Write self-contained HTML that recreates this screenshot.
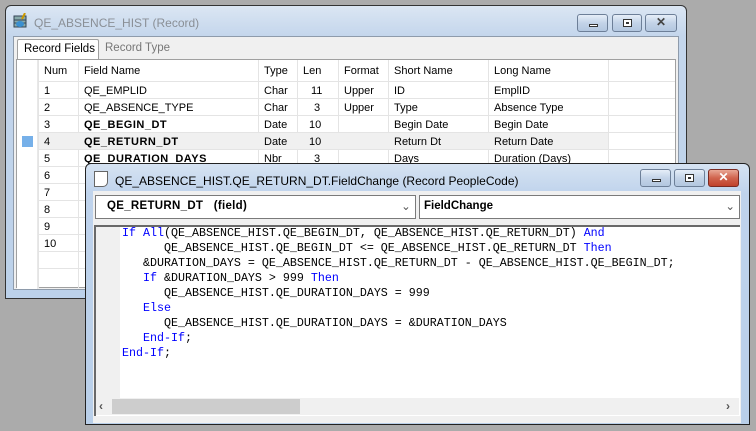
<!DOCTYPE html>
<html><head><style>
*{margin:0;padding:0;box-sizing:border-box}
body{width:756px;height:431px;background:#ababab;position:relative;overflow:hidden;font-family:"Liberation Sans",sans-serif;font-size:11px;color:#000}
.abs{position:absolute}
.win{position:absolute;border:1px solid #333;border-radius:6px 6px 0 0;background:linear-gradient(#dbe6f3,#c4d6ec 30px,#bcd1ea);}
.btn{position:absolute;height:18px;border:1px solid #6d7f98;border-radius:3px;background:linear-gradient(#e6eef8,#c3d3e8 50%,#b3c7e0)}
.grid div{position:absolute}
.code{font-family:"Liberation Mono",monospace;font-size:11.67px;line-height:15px;white-space:pre;color:#000}
.k{color:#0000ff}
</style></head><body>

<!-- window 1 -->
<div class="win" style="left:5px;top:5px;width:682px;height:294px;"></div>
<div class="abs" style="left:13px;top:13px;width:16px;height:16px;">
<svg width="16" height="16"><rect x="1" y="3" width="12" height="11" fill="#8aa" stroke="#345"/><line x1="1" y1="7" x2="13" y2="7" stroke="#345"/><line x1="1" y1="10" x2="13" y2="10" stroke="#345"/><ellipse cx="7" cy="11" rx="4" ry="3" fill="#3a8fd0"/><line x1="12" y1="0" x2="9" y2="6" stroke="#c90" stroke-width="2"/></svg></div>
<div class="abs" style="left:34px;top:16px;font-size:12px;color:#8a8f96">QE_ABSENCE_HIST (Record)</div>
<div class="btn" style="left:577px;top:14px;width:31px"><div class="abs" style="left:11px;top:9px;width:9px;height:3px;border:1px solid #333;background:#fff"></div></div>
<div class="btn" style="left:612px;top:14px;width:30px"><div class="abs" style="left:10px;top:4px;width:9px;height:8px;border:1px solid #333;background:#fff"><div style="margin:2px;height:2px;border:1px solid #333"></div></div></div>
<div class="btn" style="left:645px;top:14px;width:32px;text-align:center;font-weight:bold;font-size:12px;color:#444;line-height:15px">✕</div>
<div class="abs" style="left:13px;top:36px;width:666px;height:254px;background:#f0f0f0;border:1px solid #8e9bab"></div>
<div class="abs" style="left:17px;top:39px;width:82px;height:21px;background:#fff;border:1px solid #a0a0a0;border-bottom:none;border-radius:2px 2px 0 0;padding:3px 0 0 6px;font-size:11.5px">Record Fields</div>
<div class="abs" style="left:105px;top:42px;font-size:11.5px;color:#777">Record Type</div>
<div class="abs grid" style="left:16px;top:59px;width:660px;height:229px;background:#fff;border:1px solid #a0a0a0">
 <div style="left:0;top:0;width:21px;height:229px;background:#fff;border-right:1px solid #e8e8e8"></div>
</div>
<svg class="abs" style="left:17px;top:60px" width="658" height="228">
<g stroke="#e4e4e4" stroke-width="1">
<line x1="21.5" y1="0" x2="21.5" y2="228"/><line x1="61.5" y1="0" x2="61.5" y2="228"/><line x1="241.5" y1="0" x2="241.5" y2="228"/><line x1="280.5" y1="0" x2="280.5" y2="228"/><line x1="321.5" y1="0" x2="321.5" y2="228"/><line x1="371.5" y1="0" x2="371.5" y2="228"/><line x1="471.5" y1="0" x2="471.5" y2="228"/><line x1="591.5" y1="0" x2="591.5" y2="228"/>
<line x1="22" y1="21.5" x2="658" y2="21.5"/><line x1="22" y1="38.5" x2="658" y2="38.5"/><line x1="22" y1="55.5" x2="658" y2="55.5"/><line x1="22" y1="72.5" x2="658" y2="72.5"/><line x1="22" y1="89.5" x2="658" y2="89.5"/><line x1="22" y1="106.5" x2="658" y2="106.5"/><line x1="22" y1="123.5" x2="658" y2="123.5"/><line x1="22" y1="140.5" x2="658" y2="140.5"/><line x1="22" y1="157.5" x2="658" y2="157.5"/><line x1="22" y1="174.5" x2="658" y2="174.5"/><line x1="22" y1="191.5" x2="658" y2="191.5"/><line x1="22" y1="208.5" x2="658" y2="208.5"/>
</g>
<rect x="22" y="73" width="569" height="16" fill="#f0f0f0"/>
<rect x="5" y="76" width="11" height="11" fill="#3c8ee0" opacity=".7"/>
</svg>
<div class="abs" style="left:0;top:0;width:700px;font-size:11px">
<div class="abs" style="left:44px;top:65px">Num</div><div class="abs" style="left:84px;top:65px">Field Name</div><div class="abs" style="left:264px;top:65px">Type</div><div class="abs" style="left:303px;top:65px">Len</div><div class="abs" style="left:344px;top:65px">Format</div><div class="abs" style="left:394px;top:65px">Short Name</div><div class="abs" style="left:494px;top:65px">Long Name</div>
<div class="abs" style="left:44px;top:85px">1</div><div class="abs" style="left:84px;top:85px">QE_EMPLID</div><div class="abs" style="left:264px;top:85px">Char</div><div class="abs" style="left:311px;top:85px">11</div><div class="abs" style="left:344px;top:85px">Upper</div><div class="abs" style="left:394px;top:85px">ID</div><div class="abs" style="left:494px;top:85px">EmplID</div>
<div class="abs" style="left:44px;top:102px">2</div><div class="abs" style="left:84px;top:102px">QE_ABSENCE_TYPE</div><div class="abs" style="left:264px;top:102px">Char</div><div class="abs" style="left:314px;top:102px">3</div><div class="abs" style="left:344px;top:102px">Upper</div><div class="abs" style="left:394px;top:102px">Type</div><div class="abs" style="left:494px;top:102px">Absence Type</div>
<div class="abs" style="left:44px;top:119px">3</div><div class="abs" style="left:84px;top:119px;font-weight:bold;letter-spacing:.5px">QE_BEGIN_DT</div><div class="abs" style="left:264px;top:119px">Date</div><div class="abs" style="left:309px;top:119px">10</div><div class="abs" style="left:394px;top:119px">Begin Date</div><div class="abs" style="left:494px;top:119px">Begin Date</div>
<div class="abs" style="left:44px;top:136px">4</div><div class="abs" style="left:84px;top:136px;font-weight:bold;letter-spacing:.5px">QE_RETURN_DT</div><div class="abs" style="left:264px;top:136px">Date</div><div class="abs" style="left:309px;top:136px">10</div><div class="abs" style="left:394px;top:136px">Return Dt</div><div class="abs" style="left:494px;top:136px">Return Date</div>
<div class="abs" style="left:44px;top:153px">5</div><div class="abs" style="left:84px;top:153px;font-weight:bold;letter-spacing:.5px">QE_DURATION_DAYS</div><div class="abs" style="left:264px;top:153px">Nbr</div><div class="abs" style="left:314px;top:153px">3</div><div class="abs" style="left:394px;top:153px">Days</div><div class="abs" style="left:494px;top:153px">Duration (Days)</div>
<div class="abs" style="left:44px;top:170px">6</div><div class="abs" style="left:44px;top:187px">7</div><div class="abs" style="left:44px;top:204px">8</div><div class="abs" style="left:44px;top:221px">9</div><div class="abs" style="left:44px;top:238px">10</div>
</div>

<!-- window 2 -->
<div class="win" style="left:85px;top:163px;width:665px;height:262px;border-color:#222;background:linear-gradient(#d6e3f2,#bfd3ec 30px,#b9cfe9)"></div>
<div class="abs" style="left:94px;top:171px;width:14px;height:16px;border:1px solid #666;background:#fff;border-radius:0 0 5px 0"></div>
<div class="abs" style="left:115px;top:174px;font-size:12px">QE_ABSENCE_HIST.QE_RETURN_DT.FieldChange (Record PeopleCode)</div>
<div class="btn" style="left:640px;top:169px;width:31px"><div class="abs" style="left:11px;top:9px;width:9px;height:3px;border:1px solid #333;background:#fff"></div></div>
<div class="btn" style="left:674px;top:169px;width:31px"><div class="abs" style="left:10px;top:4px;width:9px;height:8px;border:1px solid #333;background:#fff"><div style="margin:2px;height:2px;border:1px solid #333"></div></div></div>
<div class="btn" style="left:708px;top:169px;width:31px;border-color:#7a2a22;background:linear-gradient(#e9a795,#d0644e 50%,#c0412c);text-align:center;color:#fff;font-weight:bold;font-size:12px;line-height:15px">✕</div>
<div class="abs" style="left:93px;top:191px;width:648px;height:232px;background:#f0f0f0"></div>
<div class="abs" style="left:95px;top:195px;width:321px;height:24px;background:#fff;border:1px solid #7a7a7a;font-weight:bold;font-size:11.5px;padding:4px 0 0 11px;letter-spacing:.3px">QE_RETURN_DT&nbsp;&nbsp;&nbsp;(field)<span style="position:absolute;right:4px;top:3px;font-weight:normal;color:#555">⌄</span></div>
<div class="abs" style="left:419px;top:195px;width:321px;height:24px;background:#fff;border:1px solid #7a7a7a;font-weight:bold;font-size:11.5px;padding:4px 0 0 4px">FieldChange<span style="position:absolute;right:4px;top:3px;font-weight:normal;color:#555">⌄</span></div>
<div class="abs" style="left:94px;top:225px;width:646px;height:191px;background:#fff;border-top:2px solid #696969;border-left:2px solid #696969"></div>
<div class="abs" style="left:96px;top:227px;width:24px;height:171px;background:#f0f0f0"></div>
<div class="abs" style="left:96px;top:398px;width:643px;height:17px;background:#f0f0f0"></div>
<div class="abs" style="left:112px;top:399px;width:188px;height:15px;background:#cdcdcd"></div>
<div class="abs" style="left:99px;top:399px;font-weight:bold;color:#555;font-size:12px">‹</div>
<div class="abs" style="left:726px;top:399px;font-weight:bold;color:#555;font-size:12px">›</div>
<div class="abs code" style="left:122px;top:226px"><span class="k">If All</span>(QE_ABSENCE_HIST.QE_BEGIN_DT, QE_ABSENCE_HIST.QE_RETURN_DT) <span class="k">And</span>
      QE_ABSENCE_HIST.QE_BEGIN_DT &lt;= QE_ABSENCE_HIST.QE_RETURN_DT <span class="k">Then</span>
   &amp;DURATION_DAYS = QE_ABSENCE_HIST.QE_RETURN_DT - QE_ABSENCE_HIST.QE_BEGIN_DT;
   <span class="k">If</span> &amp;DURATION_DAYS &gt; 999 <span class="k">Then</span>
      QE_ABSENCE_HIST.QE_DURATION_DAYS = 999
   <span class="k">Else</span>
      QE_ABSENCE_HIST.QE_DURATION_DAYS = &amp;DURATION_DAYS
   <span class="k">End-If</span>;
<span class="k">End-If</span>;</div>
</body></html>
